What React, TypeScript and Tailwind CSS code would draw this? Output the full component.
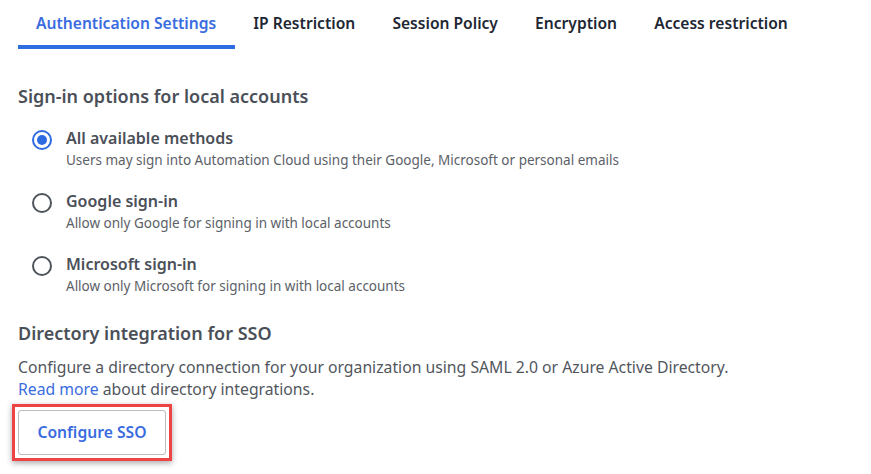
import React, { useState } from 'react';

const TABS = ['Authentication Settings', 'IP Restriction', 'Session Policy', 'Encryption', 'Access restriction'];

const OPTIONS = [
  { id: 'all', label: 'All available methods', desc: 'Users may sign into Automation Cloud using their Google, Microsoft or personal emails' },
  { id: 'google', label: 'Google sign-in', desc: 'Allow only Google for signing in with local accounts' },
  { id: 'microsoft', label: 'Microsoft sign-in', desc: 'Allow only Microsoft for signing in with local accounts' },
];

function Radio({ checked }: { checked: boolean }) {
  return (
    <span
      className={`flex h-[20px] w-[20px] shrink-0 items-center justify-center rounded-full border-2 ${checked ? 'border-[#2f6be0]' : 'border-[#4d545c]'}`}
    >
      {checked && <span className="h-[10px] w-[10px] rounded-full bg-[#2f6be0]" />}
    </span>
  );
}

export default function App() {
  const [tab, setTab] = useState(0);
  const [method, setMethod] = useState('all');

  return (
    <div className="h-[474px] w-[871px] bg-white font-['Noto_Sans',sans-serif] text-[#4b5058]">
      {/* Tabs */}
      <div className="flex pl-[17.5px]">
        {TABS.map((t, i) => (
          <button
            key={t}
            onClick={() => setTab(i)}
            className={`h-[49px] border-b-4 px-[18.6px] pt-[2px] text-[15.6px] font-semibold ${tab === i ? 'border-[#2f6be0] text-[#3a6ce0]' : 'border-transparent text-[#1e2733]'}`}
          >
            {t}
          </button>
        ))}
      </div>

      <div className="px-[18px]">
        <h2 className="mt-[35px] text-[18px] font-semibold leading-[24px] text-[#4b5058]">Sign-in options for local accounts</h2>

        <div className="mt-[19px] flex flex-col gap-[19px] pl-[14px]">
          {OPTIONS.map(o => (
            <label key={o.id} className="flex cursor-pointer items-start gap-[14px]" onClick={() => setMethod(o.id)}>
              <span className="pt-[3px]">
                <Radio checked={method === o.id} />
              </span>
              <span className="flex flex-col">
                <span className="text-[16px] font-semibold leading-[22px] text-[#4b5058]">{o.label}</span>
                <span className="text-[13.5px] leading-[22px] text-[#5c6168]">{o.desc}</span>
              </span>
            </label>
          ))}
        </div>

        <h2 className="mt-[24px] text-[18px] font-semibold leading-[24px] text-[#4b5058]">Directory integration for SSO</h2>
        <p className="mt-[11px] text-[15.75px] leading-[22px] text-[#51565d]">
          Configure a directory connection for your organization using SAML 2.0 or Azure Active Directory.
          <br />
          <a href="#" className="text-[#3a6ce0]">Read more</a> about directory integrations.
        </p>

        <div className="mt-[4px] -ml-[6px] inline-block border-[3px] border-[#ef4444] p-[3px] shadow-[0_2px_6px_rgba(0,0,0,0.35)]">
          <button className="block h-[45px] w-[148px] rounded-[3px] border border-[#b9bdc2] bg-white text-[15.7px] font-semibold text-[#3a6ce0]">
            Configure SSO
          </button>
        </div>
      </div>
    </div>
  );
}
